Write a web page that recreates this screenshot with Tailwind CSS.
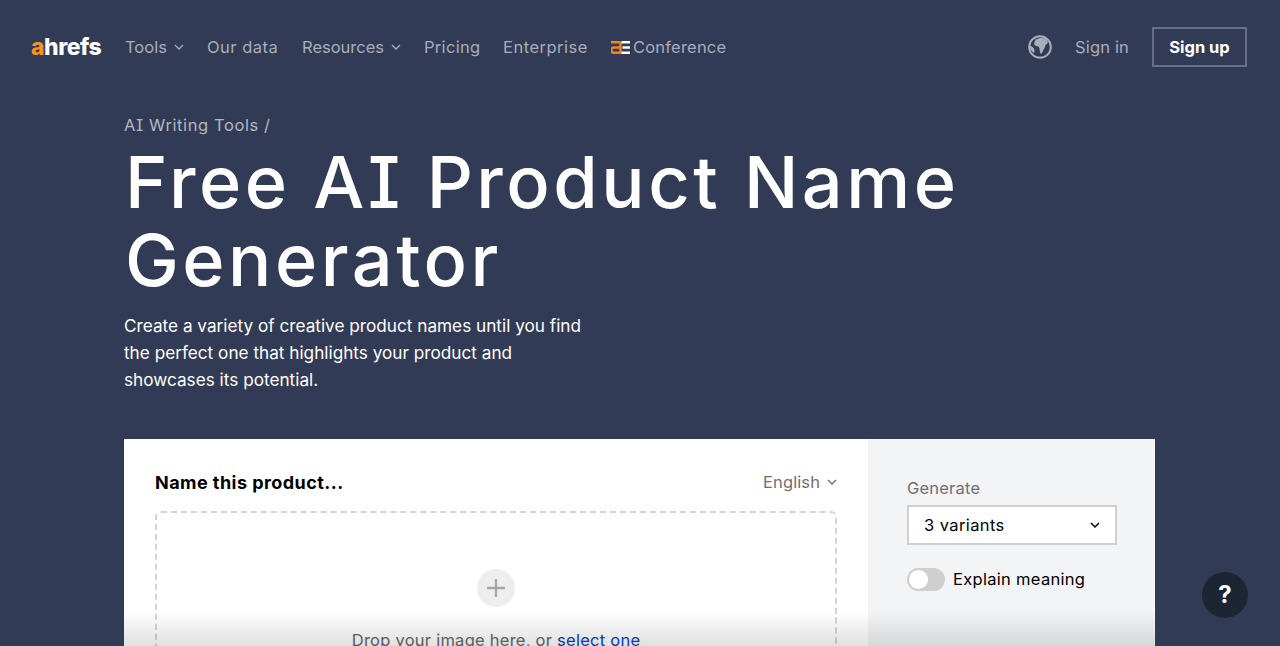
<!DOCTYPE html>
<html lang="en">
<head>
	<meta charset="UTF-8" />
	<title>Free AI Product Name Generator</title>
	<script src="https://cdn.jsdelivr.net/npm/@tailwindcss/browser@4"></script>
</head>
<body class="relative h-[646px] overflow-hidden bg-[#323b55] font-['Inter',sans-serif] [font-feature-settings:'cv08']">
	<header class="flex h-[94px] items-center justify-between pl-[31px] pr-[33px] text-[16.5px] text-[#a7adbb]">
		<nav class="flex items-center">
			<a class="w-[94px] text-[23px] font-extrabold leading-none tracking-[-0.5px] text-white"><span class="text-[#f7931e]">a</span>hrefs</a>
			<a class="flex w-[82px] items-center gap-[7px]">Tools
				<svg class="h-[10px] w-[10px]" viewBox="0 0 10 10" fill="none" stroke="currentColor" stroke-width="1.3"><path d="M1 3l4 4 4-4" /></svg>
			</a>
			<a class="w-[95px] tracking-[0.5px]">Our data</a>
			<a class="flex w-[122px] items-center gap-[7px]">Resources
				<svg class="h-[10px] w-[10px]" viewBox="0 0 10 10" fill="none" stroke="currentColor" stroke-width="1.3"><path d="M1 3l4 4 4-4" /></svg>
			</a>
			<a class="w-[79px] tracking-[0.3px]">Pricing</a>
			<a class="w-[108px] tracking-[0.5px]">Enterprise</a>
			<a class="flex items-center gap-[3px] tracking-[0.2px]">
				<svg class="h-[13px] w-[19px]" viewBox="0 0 19 13" fill="none">
					<path d="M0 1.200h9.500M9.500 6.500H3a2.600 2.600 0 0 0 0 5.300h6.500V1" stroke="#f58220" stroke-width="2.400" />
					<path d="M10.500 1.200h8.500M11.500 6.500H19M10.500 11.800h8.500" stroke="#fff" stroke-width="2.400" />
				</svg>
				Conference
			</a>
		</nav>
		<div class="flex items-center">
			<svg class="mr-[23px] h-[24px] w-[24px]" viewBox="0 0 24 24">
				<circle cx="12" cy="12" r="10.800" fill="none" stroke="#a7adbb" stroke-width="2" />
				<path d="M8 4.500c2-1.500 6-2 9-1 1.500 1 2.500 2.500 3 4-1 1-1.500 2-2.500 2.500-.5 2-1 3.500-2 4.500-.5 2-1.500 4-2.500 4.500-1-.5-1.200-3-1.500-5 0-1.500-1-2.500-2-2.800-2-.2-3.500-1-3.300-3 .3-1.700 1.500-2.700 1.300-4.200z" fill="#a7adbb" />
				<path d="M1.500 11c1.500 0 3 .5 4 2 1 1 1.500 3 .5 5-1-.5-2-1.500-3-3-.7-1-1.300-2.500-1.500-4z" fill="#a7adbb" />
			</svg>
			<a class="mr-[23px] tracking-[0.15px]">Sign in</a>
			<a class="flex h-[40px] w-[95px] items-center justify-center border-2 border-[#666f85] font-bold text-white">Sign up</a>
		</div>
	</header>

	<main class="ml-[124px] w-[1031px]">
		<p class="mt-[20px] text-[16.5px] leading-[22px] tracking-[0.6px] text-[#b2b7c3]">AI Writing Tools /</p>
		<h1 class="mt-[7px] pl-[1px] text-[72px] font-medium leading-[78px] tracking-[3.5px] text-white">Free AI Product Name<br />Generator</h1>
		<p class="mt-[13px] text-[17.200px] leading-[27px] text-white">Create a variety of creative product names until you find<br />the perfect one that highlights your product and<br />showcases its potential.</p>

		<section class="mt-[46px] flex h-[300px]">
			<div class="w-[744px] bg-white pl-[31px] pr-[31px]">
				<div class="flex h-[72px] items-center justify-between pt-[14px]">
					<h2 class="text-[18px] font-bold tracking-[0.45px] text-black">Name this product...</h2>
					<span class="flex items-center gap-[7px] text-[16.500px] tracking-[0.1px] text-[#6f6f6f]">English
						<svg class="h-[10px] w-[10px]" viewBox="0 0 10 10" fill="none" stroke="currentColor" stroke-width="1.3"><path d="M1 3l4 4 4-4" /></svg>
					</span>
				</div>
				<div class="flex h-[220px] flex-col items-center rounded-[6px] border-2 border-dashed border-[#d4d4d4] pt-[56px]">
					<span class="flex h-[38px] w-[38px] items-center justify-center rounded-full bg-[#eeeeee]">
						<svg class="h-[18px] w-[18px]" viewBox="0 0 18 18" fill="none" stroke="#a8a8a8" stroke-width="2.400"><path d="M9 0v18M0 9h18" /></svg>
					</span>
					<p class="mt-[21px] text-[16.500px] tracking-[0.25px] text-[#666666]">Drop your image here, or <a class="text-[#0b3fc4]">select one</a></p>
				</div>
			</div>
			<div class="flex-1 border-r border-white/70 bg-[#f3f4f6] pl-[39px] pt-[37px]">
				<p class="text-[16.500px] leading-[24px] tracking-[0.2px] text-[#6f6f6f]">Generate</p>
				<div class="mt-[5px] flex h-[40px] w-[210px] items-center justify-between border-2 border-[#cfcfcf] bg-white pl-[15px] pr-[15px] text-[16.500px] tracking-[0.4px] text-black">3 variants
					<svg class="h-[10px] w-[10px]" viewBox="0 0 10 10" fill="none" stroke="currentColor" stroke-width="1.500"><path d="M1 3l4 4 4-4" /></svg>
				</div>
				<div class="mt-[22px] flex items-center gap-[8px]">
					<span class="flex h-[23px] w-[38px] items-center rounded-full bg-[#cfcfcf] pl-[2px]"><span class="h-[19px] w-[19px] rounded-full bg-white"></span></span>
					<span class="text-[16.500px] tracking-[0.3px] text-black">Explain meaning</span>
				</div>
			</div>
		</section>
	</main>

	<div class="absolute bottom-0 left-[124px] h-[36px] w-[1031px] bg-gradient-to-b from-black/0 to-black/12"></div>
	<button class="absolute left-[1202px] top-[572px] flex h-[46px] w-[46px] items-center justify-center rounded-full bg-[#1c2534] text-[24px] font-bold text-white">?</button>
</body>
</html>
